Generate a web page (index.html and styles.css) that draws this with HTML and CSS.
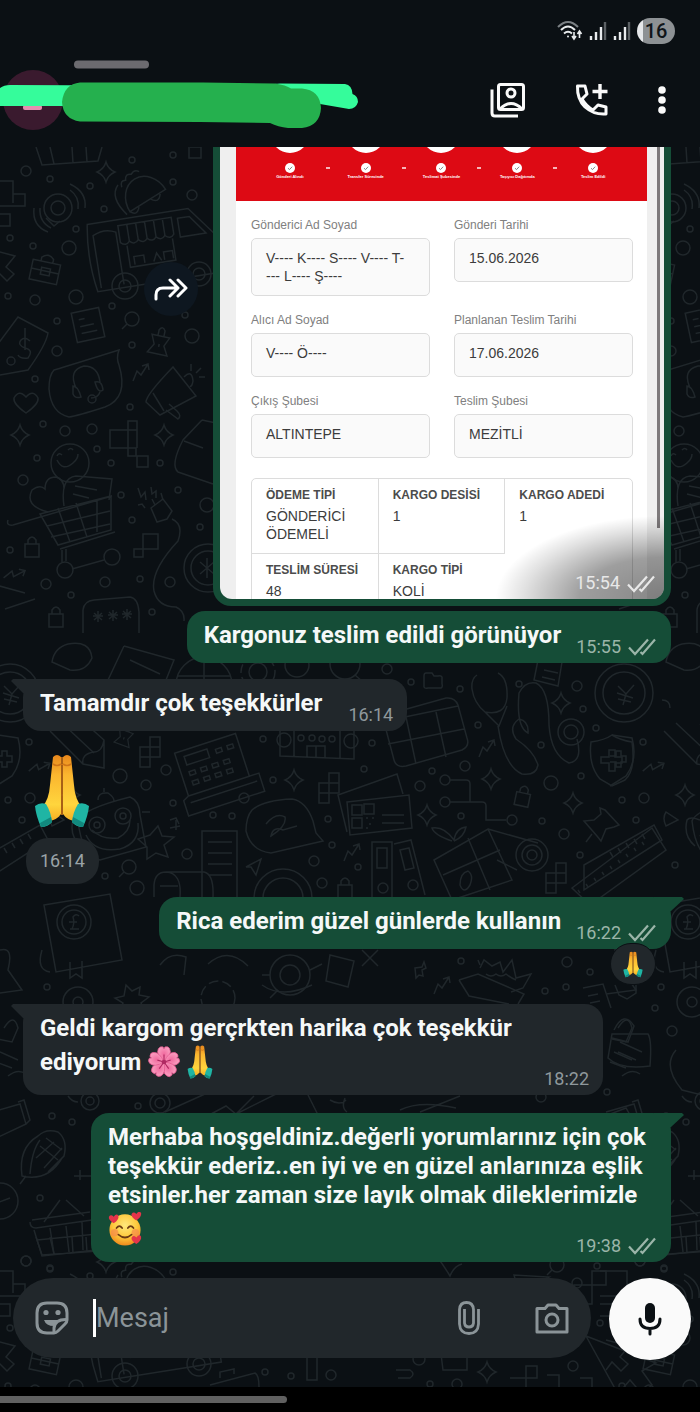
FILE: index.html
```
<!DOCTYPE html>
<html lang="tr">
<head>
  <meta charset="UTF-8" />
  <meta name="viewport" content="width=device-width, initial-scale=1.0"/>
  <title>Sohbet</title>
  <link rel="stylesheet" href="styles.css">
</head>

<body>
  <!-- shared symbols -->
  <svg class="defs" aria-hidden="true">
    <defs>
      <symbol id="ticks" viewBox="0 0 28 18">
        <path d="M1 9.500 7 16 20 1.500M12.500 14 14.500 16 27 1.500" fill="none" stroke="currentColor" stroke-width="2.200"/>
      </symbol>

      <linearGradient id="skin" x1="0" y1="0" x2="0" y2="1">
        <stop offset="0" stop-color="#e8871c"/>
        <stop offset=".3" stop-color="#fbb62f"/>
        <stop offset=".75" stop-color="#ffd53d"/>
        <stop offset="1" stop-color="#f5ae23"/>
      </linearGradient>
      <radialGradient id="face" cx=".5" cy=".35" r=".65">
        <stop offset="0" stop-color="#ffe87c"/>
        <stop offset=".6" stop-color="#fdc93c"/>
        <stop offset="1" stop-color="#f08a1c"/>
      </radialGradient>
      <radialGradient id="petal" cx=".5" cy=".5" r=".6">
        <stop offset="0" stop-color="#f06a9e"/>
        <stop offset="1" stop-color="#fba4c4"/>
      </radialGradient>

      <symbol id="pray" viewBox="0 0 56 74">
        <path d="M19 3q4-4 8 0V60q-4 6-12 7L8 53q7-7 8-22z" fill="url(#skin)"/>
        <path d="M37 3q-4-4-8 0V60q4 6 12 7l7-14q-7-7-8-22z" fill="url(#skin)"/>
        <path d="M28 3v58M19 10q4 3 8 0M29 10q4 3 8 0" fill="none" stroke="#cf7417" stroke-width="1.600"/>
        <path d="M1 52q5-4 11-2 5 8 6 18-4 5-11 5Q2 62 1 52z" fill="#1fb5a4"/>
        <path d="M55 52q-5-4-11-2-5 8-6 18 4 5 11 5 5-11 6-21z" fill="#1fb5a4"/>
        <path d="M7 73q5 0 11-5l-1-5-11 6zM49 73q-5 0-11-5l1-5 11 6z" fill="#12897e"/>
      </symbol>

      <symbol id="flower" viewBox="0 0 36 36">
        <g fill="url(#petal)" stroke="#e4588f" stroke-width=".8">
          <path id="leaf" d="M18 18Q9 10 12 4q2-3 5-2l1 2 1-2q4-1 5 2 3 6-6 14z"/>
          <use href="#leaf" transform="rotate(72 18 18)"/>
          <use href="#leaf" transform="rotate(144 18 18)"/>
          <use href="#leaf" transform="rotate(216 18 18)"/>
          <use href="#leaf" transform="rotate(288 18 18)"/>
        </g>
        <path d="M18 18V10M18 18l7-2M18 18l5 7M18 18l-5 7M18 18l-7-2" stroke="#b02a62" stroke-width="1.200"/>
        <circle cx="18" cy="18" r="2.500" fill="#b02a62"/>
      </symbol>

      <symbol id="love" viewBox="0 0 36 36">
        <circle cx="18" cy="19" r="16.500" fill="url(#face)"/>
        <circle cx="7" cy="22" r="4" fill="#f58a4b" opacity=".7"/>
        <circle cx="29" cy="22" r="4" fill="#f58a4b" opacity=".7"/>
        <path d="M9 17q3-4 6 0M21 17q3-4 6 0M11 24q7 6 14 0" fill="none" stroke="#6b3a12" stroke-width="1.800" stroke-linecap="round"/>
        <g fill="#e5344a">
          <path id="heart" d="M6 12Q0 8 1 5q2-3 5 0 3-4 5-1 1 4-5 8z"/>
          <use href="#heart" x="24" y="-3"/>
          <use href="#heart" x="24" y="22"/>
        </g>
      </symbol>

      <symbol id="check" viewBox="0 0 10 10">
        <circle cx="5" cy="5" r="5" fill="#fff"/>
        <path d="M3 5.200 4.500 6.600 7.200 3.700" fill="none" stroke="#777" stroke-width=".9"/>
      </symbol>

      <!-- wallpaper doodles -->
      <path id="d-spark" d="M0-10Q2-3 9 0 2 3 0 10-2 3-9 0-2-3 0-10z"/>
      <path id="d-blocks" d="M-6 3H4V13H-6zM4-7H14V3H4zM4 3H14V13H4zM-6 13V23H4V13"/>
      <path id="d-arrow" d="M-8 9-4-1 0 3 7-8M1-6l6-2 1 6"/>
      <path id="d-lock" d="M-7-3H7V10H-7zM-4-3V-7Q0-13 4-7V-3"/>
      <path id="d-pin" d="M-9-9H9L5 0 10 9H-10L-5 0zM-3-9v-6q3-5 6 0v6M0-1V2"/>
      <path id="d-heart" d="M0 11Q-13 2-12-4q5-9 12-1 7-8 12 1Q13 2 0 11z"/>
      <g id="d-lens"><circle r="7"/><path d="M-5 5-10 10"/></g>
      <g id="d-coin"><circle r="29"/><circle r="21"/></g>
      <path id="d-note" d="M-14-15H14V15H-14zM-8-7H-2M-8 0H6M-8 7H8"/>

      <g id="doodles">
        <path d="M-14 181H13V203M-14 206H25V194H13M-14 214H10V226H-14M36 147l6 18 56-4 4-14M50 147l4 17M72 147l1 16M86 147l1 15M190 147h11v11h-12v-11"/>
        <use href="#d-spark" x="106" y="172"/>
        <g transform="rotate(-32 140 190)"><path d="M120 203a20 24 0 0 1 42 0zM116 204q-6-24 8-30M120 203q4 8 10 1M144 203q5 9 11 1M126 178q2-7 7-4 3-6 8-2 5-3 8 2"/></g>
        <circle cx="58" cy="208" r="14"/><circle cx="58" cy="208" r="7"/>
        <path d="M46 218l8 8 6-5M40 208q-1 14 11 20M34 208q-2 18 14 24M70 190q10 7 8 19M70 184q17 8 15 24"/>
        <path d="M-8 250 15 256 6 267 14 274 7 281-2 272-8 280"/>
        <g transform="rotate(12 45 271)"><path d="M31 262H59V282H31zM31 271H59M41 268H50V275H41zM39 262v-4q6-6 12 0v4"/></g>
        <g transform="rotate(-9 150 250)">
          <path d="M92 215H194L217 245V283H92Q86 249 92 215zM96 280V227q12-6 23 0v53M122 221h54v17q-4 5-9 0-4 5-9 0-4 5-9 0-4 5-9 0-4 5-9 0-4 5-9 0zM131 221v17M140 221v17M149 221v17M158 221v17M167 221v17M128 242v22h46v-22M182 223h12l14 19h-26zM133 262v-8h10v8M152 262l4-8 4 8M163 262v-8h9v8"/>
        </g>
        <circle cx="125" cy="286" r="13"/><circle cx="125" cy="286" r="6"/><circle cx="199" cy="274" r="12"/><circle cx="199" cy="274" r="6"/>
        <path d="M-8 352 18 317 48 333Q46 345 28 370L0 375M18 355q2 4 10 3 6-8-3-10-8-3-4-8 4-4 9 1M25 328V350"/>
        <circle cx="11" cy="361" r="4"/>
        <use href="#d-note" transform="translate(88 325) rotate(-12)"/>
        <use href="#d-lens" x="132" y="319"/>
        <use href="#d-pin" transform="translate(159 345) rotate(12)"/>
        <path d="M54 370q20-6 65-20-3 8 0 15 10 33-14 42-28 9-36 10-18-4-20-28 0-14 5-19z"/>
        <path d="M76 388q-8-18 8-22 14 0 16 16M73 386q5 0 8 11-6 2-8-3zM95 382q7-2 8 8-5 4-8-8zM100 392q-2 6-9 6"/><circle cx="92" cy="399" r="4"/>
        <use href="#d-heart" x="26" y="402"/>
        <use href="#d-arrow" x="141" y="372"/>
        <path d="M173 367 196 396 160 415 146 402Q146 395 173 367zM153 393l11 18M166 410l12 9q4-3-1-8l-8-7M184 377q8-8 9 4-1 6-3 5M191 371v-7M196 373l5-5M199 377h6"/>
        <use href="#d-spark" x="20" y="435"/><use href="#d-spark" x="164" y="435"/>
        <path d="M110 430H128V448H110zM128 421H137V430H128zM128 448H136V456H128zM137 456H148V467H137zM128 430H137V448"/>
        <path d="M202 420 183 440Q170 465 178 472L213 484M184 441l19 7M202 420l14 3"/>
        <circle cx="70" cy="463" r="19"/><path d="M57 460q6 12 16 3 5-4 5-9M57 456q2-4 5-1M68 450q3-3 5 0"/>
        <path d="M48 512Q24 506 32 490q8-6 13-1 0-12 11-12 8 2 8 12 M64 506Q60 478 76 476L112 479 109 500M75 486l22 4M73 494l16 4"/>
        <path d="M40 514 111 496V530L58 545zM8 520q-2 6 5 5L112 496M47 526 110 511M51 537 110 524M58 508l12 34M76 503l11 34M97 499v33M60 549 115 532M62 550v12M66 549v12M72 569 104 560"/>
        <circle cx="65" cy="570" r="8"/><circle cx="112" cy="557" r="8"/>
        <path d="M151 508l12-9 9 12-5 8-10 3zM155 505l-3-6M163 500l-2-7M172 519q12 5 6 22-28 30-24 50 4 16 22 16 9 4 8 14M138 488l3 9 4-5 1 8M151 487l1 7 4-3v7M138 505l4-1 3 4"/>
        <use href="#d-lock" x="32" y="547"/>
        <path d="M143 534H158V549H143zM134 549H143V557H134z"/>
        <circle cx="208" cy="568" r="24"/><circle cx="208" cy="568" r="17"/><path d="M200 562l14 12M207 558v20M200 574l14-12"/>
        <use href="#d-arrow" transform="translate(15 574) rotate(30)"/>
        <path d="M-4 585 25 593M5 609 35 599M83 633V610Q84 601 94 600L130 597Q138 598 139 612V633M93 616h10M98 611v11M94 613l8 7M94 620l8-7M108 615h10M113 610v11M109 612l8 7M109 619l8-7M122 614h10M127 609v11M123 611l8 7M123 618l8-7"/>
        <use href="#d-lock" x="56" y="617"/>
        <path d="M52 662q2-14 16-18 22-4 24 14-6 14-22 12zM108 680 124 646M130 660l30 14M124 646l50 14-8 20"/>

        <use href="#d-coin" x="10" y="693"/><path d="M4 686l8 8 8-9M12 694l-3 11M3 693l16 5M4 699l13 3"/>
        <circle cx="204" cy="685" r="28"/><path d="M178 676h52M204 657v56"/>
        <circle cx="258" cy="672" r="9"/><circle cx="258" cy="672" r="17" stroke-dasharray="9 4"/>
        <circle cx="297" cy="665" r="12"/><circle cx="345" cy="664" r="15"/><path d="M355 675l8 7"/>
        <path d="M50 731 83 764 104 768V740L86 724M62 723l32 30M83 764q-2-10 11-12 8 0 10-12M-2 735 18 738Q24 760 12 776L-4 786M-4 756h6v-5h5v5h5v6h-5v5H2v-5h-6"/>
        <use href="#d-pin" transform="translate(124 738) rotate(20) scale(.8)"/>
        <use href="#d-blocks" x="146" y="744"/>
        <use href="#d-arrow" transform="translate(40 767) rotate(28)"/>
        <g transform="rotate(-18 220 770)"><path d="M182 740H246V785H182zM182 785H256V804H176V788zM190 746h24v9h-24zM182 792h70"/><path d="M190 762h6v4h-6zM202 762h6v4h-6zM214 762h6v4h-6zM226 762h6v4h-6zM190 772h6v4h-6zM202 772h6v4h-6zM214 772h6v4h-6zM226 772h6v4h-6zM222 749h6v4h-6zM234 749h6v4h-6z"/></g>
        <path d="M280 730V756L354 759V730M294 730v26M340 730v28M307 757V746h18v12M316 746v12"/><circle cx="284" cy="740" r="7"/><circle cx="351" cy="741" r="7"/>
        <circle cx="301" cy="738" r="3"/><circle cx="312" cy="738" r="3"/><circle cx="322" cy="739" r="3"/><circle cx="332" cy="739" r="3"/>
        <path d="M384 722l10 38q2 8 12 6l56-16q8-4 5-12l-9-33q-3-8-12-7l-50 14M388 744l76-15M406 717l10 47M436 712l10 45M400 718l58-12"/>
        <use href="#d-spark" x="294" y="780"/><use href="#d-blocks" x="325" y="780"/>
        <path d="M252 810q12-10 40-11 14 2 21 22l3 12 7 8-52 12q-20-2-25-22 0-14 6-21zM266 824q10-12 19-7 2 9-14 19 2-10 12-6l14-4"/>
        <path d="M347 832 338 795 397 774 403 794M347 802 409 795 412 828 350 835zM352 805h10v10h-10zM364 804h10v10h-10zM352 818h10v10h-10zM366 818h2M372 818h2M369 824h2M366 828h2M382 815h22M382 823h22"/>
        <use href="#d-arrow" x="352" y="852"/>
        <path d="M202 897V831H237V897M208 842h24M208 853h24M208 864h24M208 875h24M154 897V885Q155 872 166 872H204Q214 874 213 897M180 897q2-24-14-25M160 886h18M246 867l15-8-5 16-5-8zM372 897V842H392V897M394 844l17-4 14 55M377 848h10v20h-10zM400 850l9-2 5 20-9 2z"/>
        <circle cx="383" cy="888" r="5"/><circle cx="413" cy="885" r="5"/><circle cx="283" cy="898" r="29"/><circle cx="283" cy="898" r="20"/>
        <path d="M78 821Q82 809 130 797q10 4 10 18l6 32-46 13q-18-4-22-39zM86 835q8 18 34 14 20-6 18-26M92 830q10 10 26 8 12-6 12-18M98 800q0-8 10-7 6 4 6 8M104 792v-4M142 812h8M150 835l8-9 4 10 12 1-10 8 4 12-12-4-9 6v-12l-9-8z"/>
        <circle cx="97" cy="825" r="8"/><circle cx="97" cy="825" r="3"/><circle cx="123" cy="816" r="8"/><circle cx="123" cy="816" r="3"/>
        <path d="M-30 865 40 825 48 840-30 890zM-4 852l3 5M4 848l3 5M12 843l3 5M20 839l3 5M28 834l3 5M170 820l6-2 3 6M170 828l10-2M176 820v10"/>
        <use href="#d-lock" x="345" y="888"/>

        <path d="M424 676V687Q425 689 428 688H441Q443 687 442 684V677Q441 675 438 676H434L432 673H426Q424 673 424 676zM538 660l-4 20 24 6 4-24M544 670l14 3M542 677l13 3"/>
        <path d="M477 675q-6 4-5 14 2 14 13 23 20 4 22-14 1-20-9-25M485 712l14 14 8-20M498 726q6 40 24 48 14 2 16-9-4-14-22-26-8-12 3-20 10 2 9 14-12-6-9-40 6-12 17-10 13 6 13 42 2 30 20 38 14-2 8-24"/>
        <circle cx="571" cy="732" r="13"/><circle cx="571" cy="732" r="7"/>
        <use href="#d-spark" x="561" y="703"/><use href="#d-spark" x="491" y="779"/><use href="#d-spark" x="573" y="803"/><use href="#d-spark" x="427" y="815"/><use href="#d-spark" x="71" y="795"/>
        <use href="#d-arrow" x="487" y="748"/>
        <path d="M591 742Q605 740 612 735q8 5 20 7 4 28-7 38l-13 6-12-7q-12-14-9-37zM609 750h6v7h7v6h-7v8h-6v-8h-8v-6h8z"/>
        <path d="M450 780h16q4 0 4 4v18h12q4 0 4 4v14h20M450 802h20"/><circle cx="445" cy="780" r="5"/><circle cx="445" cy="802" r="5"/><circle cx="512" cy="820" r="5"/>
        <use href="#d-lock" transform="translate(523 796) rotate(12)"/>
        <path d="M600 808l5 2 14 15-5 2-8 2-5 12-4-5-13-15 10-1 7-6zM592 834l-6 8"/>
        <path d="M572 888 652 828 666 850 590 905zM578 890l2 3M586 884l2 3M594 878l2 3M602 872l2 3M610 866l2 3M618 860l2 3M626 854l2 3M634 848l2 3M642 842l2 3"/>
        <path d="M434 860 488 829 512 880 452 900zM443 875 500 850M468 838l22 52M452 841q-18-6-20-13 12-2 22 12 2-12 12-13-2 10-12 14M488 829l50 14M497 860l20 10M460 885q0-12 8-14 6 4 2 14-6 10-10 0z"/>
        <circle cx="532" cy="855" r="16"/><circle cx="532" cy="855" r="10"/><circle cx="532" cy="855" r="5"/>
        <use href="#d-blocks" x="552" y="870"/>
        <path d="M52 812q-4 6 0 14l12-6zM86 820q-10-4-13 0-4 16 8 26M48 700q8 0 8 8"/>

        <circle cx="74" cy="922" r="17"/><circle cx="74" cy="922" r="12"/><path d="M70 929h9M72 929q3-6 1-12 3-4 6-1M69 922h8M44 905l66-11 12 66-66 12zM42 950q-6 20 8 22M70 962v16l6-4 6 4v-17"/>
        <path d="M0 950q14-4 8 20l14 20-30 4"/>
        <circle cx="78" cy="1002" r="15"/><circle cx="78" cy="1002" r="5"/>
        <path d="M126 985l6 6 8-4-1 8 10 2-8 6 4 8-9-2-3 7-4-7-9 2 3-8-8-5 9-2z"/>
        <circle cx="218" cy="998" r="17" stroke-dasharray="10 4"/><path d="M208 964q20-18 40 2M160 965q10-14 26-8l-2 18"/>
        <circle cx="290" cy="975" r="20"/><circle cx="290" cy="975" r="10"/><path d="M270 975h-8M278 990l-8 8M310 970l12-6M262 985q20 14 50 0"/>
        <path d="M330 955l24 6-6 26-22-6zM362 950l16 16M378 950l-16 16M415 968l7-1 2-5 2 6-4 2 1 6-4-1-3 3z"/>
        <use href="#d-arrow" x="442" y="985"/>
        <path d="M480 965l-2-5M459 980 478 974 524 994 518 1004M459 980l10 16 40 8M480 968l4-8 8 6 8-4 3 10 9-12 4 18 15-4-8 14-12 4M486 974q5 4 10 0 5 4 10 0 5 4 10 6"/>
        <path d="M583 988l20-4 8 24M588 996l10-2M590 1003l10-2M615 985l4 10 8 4 9-6v-8"/>
        <path d="M614 1030q10-20 20-4l-6 16-16-4M4 1028q10-16 14 0l-6 14-14-3M0 1052l18 8M-4 1062l16 6M8 1076q10-8 18-2"/>
        <g transform="translate(626 1030)"><path d="M-14 4H22Q26 10 24 36-6 40-18 28zM-6 12l22 10M-8 22l18 8"/></g>
        <path d="M676 1050q-14 16 6 40l40 10M-8 1112 20 1104 26 1124-8 1140M18 1102l6-2 6 20-4 4M100 1118v60M74 1176h20M80 1170v10"/>
        <circle cx="90" cy="1101" r="9"/><circle cx="90" cy="1101" r="4"/><circle cx="160" cy="1103" r="10"/><circle cx="160" cy="1103" r="5"/>
        <path d="M68 1096q4 6 10 6M165 1112l40-18M196 1122l30-16 10 8 40-20M236 1114l18-18M308 1095l10 20M330 1100q10 6 16 0M345 1098q-4 10 2 14M400 1110q20-10 56-2M420 1112l40-16M600 1118l26-10 8 14"/>
        <path d="M38 1136q-20 12-16 40 26 6 40-18M38 1136q8-8 20-4 10 8 6 24l-16 16M40 1146l18 14M46 1138l16 12M36 1158l18-16M44 1168l18-20M30 1174q2-24 10-34M20 1184l6-8"/><circle cx="0" cy="1201" r="18"/><path d="M-6 1204l16-6"/>
        <path d="M32 1220 90 1212M30 1222q0 6 6 6l56-8M34 1230 42 1256 96 1250M50 1228l4 26M66 1226l3 26M82 1222l1 28M37 1240l60-6M44 1222l16-22M66 1200l18 16"/>

        <!-- lower strip -->
        <path d="M438 1258q6 8 12 18 4-10 12-12M514 1275l5 18 30-16zM574 1285H592V1304H574zM592 1271H606V1285H592zM396 1370h14q6 4 0 8h-12M510 1378H526V1390M526 1366H537V1378H526zM547 1375H559V1390M580 1378H592V1390M307 1355h10v25h-10zM210 1385l45-12q4 2 4 14M220 1378v-6l14-3v5"/>
        <use href="#d-lens" x="557" y="1265"/><use href="#d-spark" x="487" y="1372"/>
        <path d="M586 1336l32 58 12-14 12 14 10-9-10-14 14-8z"/>
        <g transform="translate(455 1362)"><path d="M-14-8H12V8H-12z"/></g>

        <!-- loose bubbles -->
        <circle cx="26" cy="171" r="5"/><circle cx="50" cy="179" r="3"/><circle cx="132" cy="160" r="3"/><circle cx="173" cy="155" r="3"/><circle cx="173" cy="182" r="3"/><circle cx="192" cy="195" r="5"/><circle cx="90" cy="186" r="3"/><circle cx="104" cy="209" r="3"/><circle cx="76" cy="229" r="3"/><circle cx="10" cy="238" r="3"/><circle cx="33" cy="246" r="3"/><circle cx="69" cy="248" r="7"/><circle cx="8" cy="296" r="3"/><circle cx="35" cy="300" r="5"/><circle cx="76" cy="297" r="7"/><circle cx="112" cy="306" r="3"/><circle cx="57" cy="321" r="3"/><circle cx="185" cy="315" r="3"/><circle cx="57" cy="351" r="5"/><circle cx="192" cy="336" r="7"/><circle cx="132" cy="345" r="3"/><circle cx="35" cy="379" r="3"/><circle cx="130" cy="407" r="3"/><circle cx="43" cy="424" r="3"/><circle cx="65" cy="431" r="5"/><circle cx="92" cy="429" r="5"/><circle cx="97" cy="449" r="3"/><circle cx="111" cy="463" r="3"/><circle cx="160" cy="463" r="3"/><circle cx="37" cy="458" r="3"/><circle cx="23" cy="480" r="5"/><circle cx="121" cy="495" r="3"/><circle cx="178" cy="490" r="3"/><circle cx="207" cy="505" r="7"/><circle cx="132" cy="520" r="3"/><circle cx="200" cy="527" r="3"/><circle cx="10" cy="550" r="3"/><circle cx="46" cy="584" r="5"/><circle cx="71" cy="595" r="3"/><circle cx="105" cy="582" r="5"/><circle cx="140" cy="579" r="3"/><circle cx="170" cy="582" r="5"/><circle cx="152" cy="612" r="3"/>
        <circle cx="29" cy="742" r="3"/><circle cx="120" cy="776" r="7"/><circle cx="166" cy="770" r="5"/><circle cx="146" cy="785" r="5"/><circle cx="30" cy="798" r="5"/><circle cx="8" cy="800" r="3"/><circle cx="22" cy="820" r="3"/><circle cx="173" cy="803" r="3"/><circle cx="213" cy="815" r="3"/><circle cx="232" cy="816" r="3"/><circle cx="244" cy="798" r="5"/><circle cx="263" cy="739" r="3"/><circle cx="273" cy="780" r="3"/><circle cx="364" cy="769" r="3"/><circle cx="372" cy="743" r="3"/><circle cx="328" cy="819" r="3"/><circle cx="332" cy="845" r="3"/><circle cx="187" cy="854" r="5"/><circle cx="314" cy="861" r="5"/><circle cx="358" cy="867" r="3"/><circle cx="322" cy="883" r="5"/><circle cx="137" cy="888" r="7"/><circle cx="105" cy="876" r="3"/><use href="#d-lens" x="129" y="867"/>
        <circle cx="387" cy="669" r="5"/><circle cx="411" cy="682" r="3"/><circle cx="460" cy="689" r="3"/><circle cx="519" cy="684" r="3"/><circle cx="577" cy="686" r="5"/><circle cx="583" cy="709" r="3"/><circle cx="478" cy="725" r="3"/><circle cx="541" cy="745" r="3"/><circle cx="596" cy="728" r="3"/><circle cx="465" cy="766" r="5"/><circle cx="432" cy="771" r="3"/><circle cx="420" cy="786" r="5"/><circle cx="551" cy="783" r="7"/><circle cx="581" cy="776" r="3"/><circle cx="461" cy="816" r="3"/><circle cx="542" cy="821" r="3"/><circle cx="564" cy="834" r="5"/><circle cx="580" cy="855" r="3"/><circle cx="61" cy="865" r="3"/>
        <circle cx="461" cy="961" r="3"/><circle cx="567" cy="962" r="5"/><circle cx="545" cy="991" r="3"/><circle cx="566" cy="987" r="3"/><circle cx="590" cy="972" r="3"/><circle cx="47" cy="987" r="3"/><circle cx="58" cy="1031" r="5"/><circle cx="41" cy="1008" r="3"/><circle cx="138" cy="1106" r="3"/><circle cx="52" cy="1116" r="3"/><circle cx="72" cy="1122" r="3"/><circle cx="40" cy="1198" r="3"/><circle cx="26" cy="1261" r="5"/><circle cx="50" cy="1268" r="3"/><circle cx="541" cy="1097" r="5"/><circle cx="607" cy="1092" r="3"/><circle cx="597" cy="1266" r="3"/><circle cx="577" cy="1283" r="5"/><circle cx="600" cy="1323" r="3"/><circle cx="573" cy="1366" r="5"/><circle cx="265" cy="1372" r="3"/><circle cx="291" cy="1376" r="3"/><circle cx="331" cy="1375" r="5"/><circle cx="430" cy="1384" r="3"/><circle cx="457" cy="1384" r="5"/><circle cx="419" cy="1359" r="6"/>
      </g>
    </defs>
  </svg>

  <header class="header">
    <div class="status-bar">
      <svg width="26" height="22" viewBox="0 0 26 22" fill="none" stroke="#e8ebed" stroke-width="2">
        <path d="M1 7Q11-3 21 7" stroke="#7b8084"/>
        <path d="M4 10Q11 3 18 10M7 13.500Q11 10 15 13.500"/>
        <path d="M17 12v6M15 16l2 3 2-3M22.500 18v-6M20.500 14l2-3 2 3" stroke-width="1.600"/>
        <circle cx="11" cy="16.500" r="1" fill="#e8ebed" stroke="none"/>
      </svg>
      <svg width="18" height="20" viewBox="0 0 18 20">
        <path d="M2 15v4M7 11v8M12 6v13" stroke="#e8ebed" stroke-width="2.400"/><path d="M16 1v18" stroke="#5b6064" stroke-width="2.400"/>
      </svg>
      <svg width="18" height="20" viewBox="0 0 18 20">
        <path d="M2 15v4M7 11v8M12 6v13" stroke="#e8ebed" stroke-width="2.400"/><path d="M16 1v18" stroke="#5b6064" stroke-width="2.400"/>
      </svg>
      <span class="battery">16</span>
    </div>

    <div class="app-bar">
      <div class="avatar"></div>
      <div class="actions">
        <button aria-label="Kişi kartı">
          <svg width="36" height="36" viewBox="0 0 36 36" fill="none" stroke="#fafafa" stroke-width="3">
            <rect x="8.500" y="2.500" width="25" height="25" rx="2"/>
            <circle cx="21" cy="11" r="4"/>
            <path d="M10 27q11-11 22 0M2 7.500V31q0 3 3 3H28"/>
          </svg>
        </button>
        <button aria-label="Ara">
          <svg width="34" height="34" viewBox="0 0 34 34" fill="none" stroke="#fafafa" stroke-width="3" stroke-linejoin="round">
            <path d="M2.500 3H10l2 8-5 5Q11 23 18 27l5-5 8 2v7Q19 32 10 24 2 16 2.500 3z"/>
            <path d="M25 1v15M17.500 8.500h15" stroke-width="3.400"/>
          </svg>
        </button>
        <button class="more" aria-label="Diğer seçenekler">
          <svg width="8" height="28" viewBox="0 0 8 28" fill="#fafafa">
            <circle cx="4" cy="4" r="3.800"/><circle cx="4" cy="14" r="3.800"/><circle cx="4" cy="24" r="3.800"/>
          </svg>
        </button>
      </div>
    </div>

    <!-- marker strokes over the contact name -->
    <svg class="marker" width="360" height="147" viewBox="0 0 360 147" aria-hidden="true">
      <path d="M78 64.500H145" stroke="#6c6b70" stroke-width="8" stroke-linecap="round"/>
      <rect x="23" y="105" width="19" height="5" rx="2" fill="#e58fb0"/>
      <path d="M0 88Q4 85 10 85L250 86 280 83.500 345 84Q352 85 352.500 94 358 96 358 102 356 109 349 109L320 104 200 106H0z" fill="#35fc9b"/>
      <path d="M80 82.500H203L275 83.500Q286 85 291 88.500H302Q320 90 321 108 320 126 302 128H288Q278 127 270 123L200 122 80 121.500Q63 119 62 102 64 84 80 82.500z" fill="#25b04e"/>
    </svg>
  </header>

  <main class="chat">
    <svg class="wallpaper" aria-hidden="true">
      <g transform="translate(0 -147)">
        <use href="#doodles"/>
        <use href="#doodles" x="614"/>
        <use href="#doodles" y="1090"/>
        <use href="#doodles" x="614" y="1090"/>
      </g>
    </svg>

    <div class="messages">
      <div class="photo-row">
        <button class="forward" aria-label="İlet">
          <svg width="34" height="24" viewBox="0 0 34 24" fill="none" stroke="#fff" stroke-width="3" stroke-linecap="round" stroke-linejoin="round">
            <path d="M2 22V18Q2 11 9 11H22M16 3l8 8-8 8M24 3l8 8-8 8"/>
          </svg>
        </button>

        <div class="photo">
          <div class="shot">
            <div class="page">
              <div class="steps">
                <div class="step"><i class="disc"></i><svg width="10" height="10"><use href="#check"/></svg><span>Gönderi Alındı</span></div>
                <div class="step"><i class="disc"></i><svg width="10" height="10"><use href="#check"/></svg><span>Transfer Sürecinde</span></div>
                <div class="step"><i class="disc"></i><svg width="10" height="10"><use href="#check"/></svg><span>Teslimat Şubesinde</span></div>
                <div class="step"><i class="disc"></i><svg width="10" height="10"><use href="#check"/></svg><span>Taşıyıcı Dağıtımda</span></div>
                <div class="step"><i class="disc"></i><svg width="10" height="10"><use href="#check"/></svg><span>Teslim Edildi</span></div>
              </div>

              <div class="details">
                <dl class="fields">
                  <div><dt>Gönderici Ad Soyad</dt><dd>V---- K---- S---- V---- T-<br>--- L---- Ş----</dd></div>
                  <div><dt>Gönderi Tarihi</dt><dd>15.06.2026</dd></div>
                  <div><dt>Alıcı Ad Soyad</dt><dd>V---- Ö----</dd></div>
                  <div><dt>Planlanan Teslim Tarihi</dt><dd>17.06.2026</dd></div>
                  <div><dt>Çıkış Şubesi</dt><dd>ALTINTEPE</dd></div>
                  <div><dt>Teslim Şubesi</dt><dd>MEZİTLİ</dd></div>
                </dl>

                <dl class="cargo">
                  <div><dt>ÖDEME TİPİ</dt><dd>GÖNDERİCİ ÖDEMELİ</dd></div>
                  <div><dt>KARGO DESİSİ</dt><dd>1</dd></div>
                  <div class="open"><dt>KARGO ADEDİ</dt><dd>1</dd></div>
                  <div><dt>TESLİM SÜRESİ</dt><dd>48</dd></div>
                  <div class="open"><dt>KARGO TİPİ</dt><dd>KOLİ</dd></div>
                </dl>
              </div>
            </div>
            <div class="scrollbar"></div>
            <div class="meta photo-meta">15:54 <svg width="28" height="18"><use href="#ticks"/></svg></div>
          </div>
        </div>
      </div>

      <div class="bubble out">
        <p>Kargonuz teslim edildi görünüyor</p>
        <div class="meta">15:55 <svg width="28" height="18"><use href="#ticks"/></svg></div>
      </div>

      <div class="bubble in tail">
        <p>Tamamdır çok teşekkürler</p>
        <div class="meta">16:14</div>
      </div>

      <div class="big-emoji">
        <svg width="56" height="74" role="img" aria-label="🙏"><use href="#pray"/></svg>
        <div class="chip">16:14</div>
      </div>

      <div class="bubble out tail">
        <p>Rica ederim güzel günlerde kullanın</p>
        <div class="meta">16:22 <svg width="28" height="18"><use href="#ticks"/></svg></div>
        <button class="reaction" aria-label="Tepki">
          <svg width="20" height="27"><use href="#pray"/></svg>
        </button>
      </div>

      <div class="bubble in tail long">
        <p>Geldi kargom gerçrkten harika çok teşekkür ediyorum <svg class="emoji" width="34" height="34" role="img" aria-label="🌸"><use href="#flower"/></svg> <svg class="emoji" width="26" height="34" role="img" aria-label="🙏"><use href="#pray"/></svg></p>
        <div class="meta">18:22</div>
      </div>

      <div class="bubble out tail long">
        <p>Merhaba hoşgeldiniz.değerli yorumlarınız için çok teşekkür ederiz..en iyi ve en güzel anlarınıza eşlik etsinler.her zaman size layık olmak dileklerimizle <svg class="emoji" width="34" height="34" role="img" aria-label="🥰"><use href="#love"/></svg></p>
        <div class="meta">19:38 <svg width="28" height="18"><use href="#ticks"/></svg></div>
      </div>
    </div>

    <form class="composer">
      <div class="input-bar">
        <button type="button" aria-label="Çıkartmalar">
          <svg width="34" height="34" viewBox="0 0 34 34" fill="none" stroke="#8b9498" stroke-width="3">
            <path d="M12 2H22Q32 2 32 12V19Q32 21 30 23L23 30Q21 32 19 32H12Q2 32 2 22V12Q2 2 12 2z"/>
            <path d="M19 32V27Q20 18 32 18.500"/>
            <circle cx="11" cy="11.500" r="2.600" fill="#8b9498" stroke="none"/><circle cx="23" cy="11.500" r="2.600" fill="#8b9498" stroke="none"/>
            <path d="M9 19H25Q20 22 19 25 11 25 9 19z" fill="#8b9498" stroke="none"/>
          </svg>
        </button>
        <input type="text" placeholder="Mesaj" aria-label="Mesaj">
        <button type="button" aria-label="Ekle">
          <svg width="22" height="34" viewBox="0 0 22 34" fill="none" stroke="#8b9498" stroke-width="2.800">
            <path d="M20.500 8V23Q20 32.500 11 32.500 2 32.500 1.500 23V8.500Q2 1.500 8.500 1.500 15 1.500 15.500 8.500V22Q15 26 11 26 7 26 6.500 22V8"/>
          </svg>
        </button>
        <button type="button" class="camera" aria-label="Kamera">
          <svg width="34" height="31" viewBox="0 0 34 31" fill="none" stroke="#8b9498" stroke-width="3" stroke-linejoin="round">
            <path d="M2 5.500H10L13 2H21L24 5.500H32V29H2z"/>
            <circle cx="17" cy="17" r="6"/>
          </svg>
        </button>
      </div>
      <button type="button" class="mic" aria-label="Sesli mesaj">
        <svg width="24" height="34" viewBox="0 0 24 34" fill="none" stroke="#0b1014" stroke-width="3" stroke-linecap="round">
          <rect x="7" y="1" width="10" height="20" rx="5" fill="#0b1014" stroke="none"/>
          <path d="M2 17Q2 26.500 12 26.500 22 26.500 22 17M12 27v5"/>
        </svg>
      </button>
    </form>
  </main>

  <div class="nav-bar"></div>
</body>
</html>
```
FILE: styles.css
```
* {
  box-sizing: border-box;
}

body {
  margin: 0;
  height: 100vh;
  display: flex;
  flex-direction: column;
  overflow: hidden;
  background-color: #0b1014;
  font-family: Roboto, sans-serif;
  color: #f5f8f8;
}

p,
dl,
dd {
  margin: 0;
}

button {
  display: flex;
  align-items: center;
  justify-content: center;
  padding: 0;
  border: none;
  background: transparent;
  cursor: pointer;
}

.defs {
  position: absolute;
  width: 0;
  height: 0;
}

/* header */
.header {
  position: relative;
  flex: none;
  background-color: #0b1014;
}

.status-bar {
  display: flex;
  justify-content: flex-end;
  align-items: center;
  gap: 6px;
  height: 52px;
  padding: 10px 25px 0 0;
}

.battery {
  width: 38px;
  height: 26px;
  border-radius: 13px;
  background: linear-gradient(to right, #e6e8ea 6px, #8d9194 6px);
  color: #101519;
  font-size: 20px;
  font-weight: 500;
  line-height: 26px;
  text-align: center;
}

.app-bar {
  display: flex;
  align-items: center;
  justify-content: space-between;
  height: 95px;
  padding: 0 34px 0 3px;
}

.avatar {
  width: 60px;
  height: 60px;
  border-radius: 50%;
  background-color: #3a1a2e;
}

.actions {
  display: flex;
  align-items: center;
  gap: 49px;
}

.marker {
  position: absolute;
  top: 0;
  left: 0;
}

/* chat */
.chat {
  position: relative;
  flex: 1;
  min-height: 0;
  display: flex;
  flex-direction: column;
  overflow: hidden;
}

.wallpaper {
  position: absolute;
  top: 0;
  left: 0;
  width: 100%;
  height: 100%;
  fill: none;
  stroke: #20272b;
  stroke-width: 1.5px;
}

.messages {
  position: relative;
  flex: 1;
  min-height: 0;
  display: flex;
  flex-direction: column;
  justify-content: flex-end;
  align-items: flex-start;
  padding: 0 29px 0 23px;
}

.photo-row {
  flex: none;
  align-self: flex-end;
  display: flex;
  align-items: center;
  gap: 15px;
}

.forward {
  width: 54px;
  height: 54px;
  border-radius: 50%;
  background-color: #0e1720;
}

.photo {
  width: 458px;
  padding: 7px;
  border-radius: 18px;
  background-color: #154d37;
}

.shot {
  position: relative;
  height: 620px;
  padding: 0 17px 0 16px;
  border-radius: 12px;
  background-color: #efefef;
  overflow: hidden;
}

.page {
  background-color: #fff;
  font-family: "Liberation Sans", Arial, sans-serif;
  color: #3c3c3c;
}

.steps {
  display: grid;
  grid-template-columns: repeat(5, 1fr);
  height: 222px;
  padding: 136px 16px 0;
  background-color: #dd0a14;
}

.step {
  position: relative;
  display: flex;
  flex-direction: column;
  align-items: center;
  color: #fff;
  font-size: 4px;
  font-weight: bold;
  line-height: 6px;
  white-space: nowrap;
}

.step + .step::before {
  content: "";
  position: absolute;
  top: 52px;
  left: -2px;
  width: 4px;
  height: 2px;
  background-color: #f6b6b9;
}

.disc {
  width: 38px;
  height: 38px;
  margin-bottom: 10px;
  border-radius: 50%;
  background-color: #fff;
}

.step span {
  margin-top: 1px;
}

.details {
  padding: 15px 14px 0 15px;
}

.fields {
  display: grid;
  grid-template-columns: 1fr 1fr;
  gap: 15px 24px;
}

.fields dt {
  margin-bottom: 4px;
  color: #808080;
  font-size: 12px;
  line-height: 18px;
}

.fields dd {
  min-height: 44px;
  padding: 10px 14px;
  border: 1px solid #dcdcdc;
  border-radius: 5px;
  background-color: #fafafa;
  font-size: 14px;
  line-height: 18px;
}

.cargo {
  display: grid;
  grid-template-columns: repeat(3, 1fr);
  margin-top: 20px;
  border: 1px solid #dcdcdc;
  border-radius: 5px;
}

.cargo div {
  padding: 7px 4px 10px 14px;
  border-right: 1px solid #dcdcdc;
  border-bottom: 1px solid #dcdcdc;
}

.cargo .open {
  border: none;
}

.cargo dt {
  margin-bottom: 3px;
  color: #4c4c4c;
  font-size: 12px;
  font-weight: bold;
  line-height: 18px;
}

.cargo dd {
  font-size: 14px;
  line-height: 18px;
}

.scrollbar {
  position: absolute;
  top: 0;
  right: 4px;
  bottom: 71px;
  width: 3px;
  background-color: #7d797b;
}

/* bubbles */
.bubble {
  position: relative;
  flex: none;
  display: flex;
  gap: 15px;
  max-width: 580px;
  padding: 10px 15px 13px 17px;
  border-radius: 18px;
}

.bubble p {
  font-size: 24px;
  font-weight: 700;
  line-height: 29px;
}

.out {
  align-self: flex-end;
  margin-top: 5px;
  background-color: #154d37;
}

.in {
  margin-top: 16px;
  padding-right: 14px;
  background-color: #21272b;
}

.in:not(.long) {
  gap: 26px;
}

.tail::before {
  content: "";
  position: absolute;
  top: 0;
  width: 30px;
  height: 14px;
  background-color: inherit;
}

.out.tail::before {
  right: -13px;
  clip-path: polygon(0 0, 28px 0, 30px 2px, 17px 14px, 0 14px);
}

.in.tail::before {
  left: -12px;
  clip-path: polygon(30px 0, 2px 0, 0 2px, 12px 14px, 30px 14px);
}

.meta {
  display: flex;
  align-items: center;
  align-self: flex-end;
  gap: 7px;
  color: #9bb5a9;
  font-size: 18px;
  line-height: 20px;
}

.bubble .meta {
  margin-bottom: -7px;
}

.in .meta {
  color: #8f989c;
}

.photo-meta {
  position: absolute;
  right: 0;
  bottom: 0;
  width: 170px;
  height: 84px;
  align-items: flex-end;
  justify-content: flex-end;
  padding: 0 9px 6px 0;
  background: radial-gradient(ellipse at 100% 100%, rgba(0, 0, 0, 0.48), rgba(0, 0, 0, 0.38) 35%, rgba(0, 0, 0, 0.12) 58%, transparent 70%);
  color: #e8e8e8;
}

.long {
  display: grid;
}

.long p,
.long .meta {
  grid-area: 1 / 1;
}

.long .meta {
  justify-self: end;
}

.emoji {
  margin: 2px 0 3px;
  vertical-align: -12px;
}

.big-emoji {
  flex: none;
  display: flex;
  flex-direction: column;
  align-items: center;
  gap: 10px;
  margin: 23px 0 0 3px;
}

.chip {
  padding: 12px 14px;
  border-radius: 22px;
  background-color: #21272b;
  color: #9aa3a7;
  font-size: 18px;
  line-height: 22px;
}

.big-emoji + .out {
  margin-top: 13px;
}

.out + .in.long {
  margin-top: 55px;
}

.in + .out.long {
  margin-top: 18px;
}

.reaction {
  position: absolute;
  right: 15px;
  bottom: -36px;
  width: 46px;
  height: 42px;
  border: 1px solid #0b1014;
  border-radius: 21px;
  background-color: #21272b;
}

/* composer */
.composer {
  position: relative;
  flex: none;
  display: flex;
  align-items: flex-start;
  gap: 18px;
  padding: 16px 9px 27px 13px;
}

.input-bar {
  flex: 1;
  min-width: 0;
  display: flex;
  align-items: center;
  height: 80px;
  padding: 0 22px;
  border-radius: 40px;
  background-color: #21272b;
}

.input-bar input {
  flex: 1;
  min-width: 0;
  height: 38px;
  margin: 0 24px;
  padding: 0;
  border: none;
  border-left: 3px solid #fff;
  outline: none;
  background: transparent;
  color: #f5f8f8;
  font-family: inherit;
  font-size: 27px;
}

.input-bar input::placeholder {
  color: #8b9498;
  opacity: 1;
}

.camera {
  margin-left: 55px;
}

.mic {
  flex: none;
  width: 82px;
  height: 82px;
  border-radius: 50%;
  background-color: #fafafa;
}

/* gesture bar */
.nav-bar {
  flex: none;
  height: 25px;
  padding-top: 9px;
  background-color: #000;
}

.nav-bar::before {
  content: "";
  display: block;
  width: 41%;
  height: 7px;
  border-radius: 0 4px 4px 0;
  background-color: #606060;
}
```
